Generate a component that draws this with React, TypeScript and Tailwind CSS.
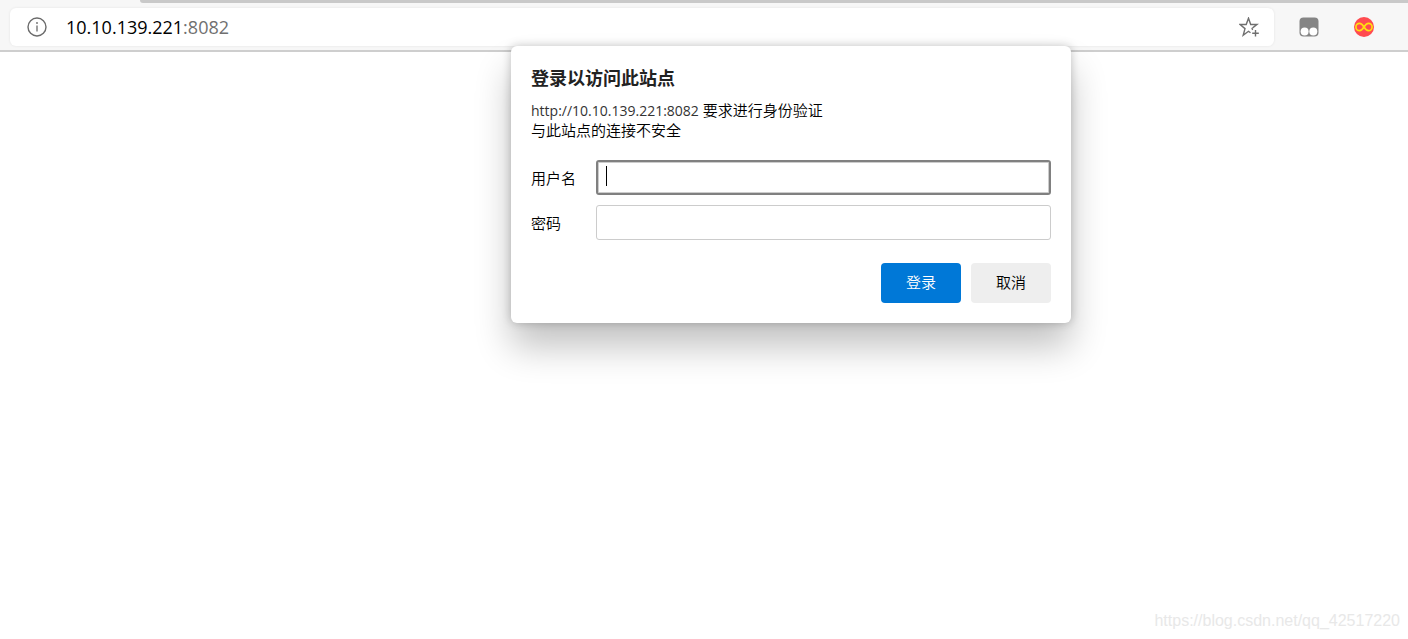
import React, { useState } from "react";

function InfoIcon() {
  return (
    <svg width="20" height="20" viewBox="0 0 20 20" fill="none" stroke="#6b6b6b" aria-hidden="true">
      <circle cx="10" cy="10" r="9" strokeWidth="1.4" />
      <path d="M10 8.5v6" strokeWidth="1.3" />
      <circle cx="10" cy="6" r="0.9" fill="#6b6b6b" stroke="none" />
    </svg>
  );
}

function FavoriteIcon() {
  return (
    <svg width="20" height="20" viewBox="0 0 20 20" fill="none" stroke="#6f6f6f" aria-hidden="true">
      <path
        d="M13.6 10.9 18 7.5h-6.3L9.5 1.2 7.2 7.5H1l5 4.1-1.8 6.6 5.3-3.9 2 1.4"
        strokeWidth="1.4"
      />
      <path d="M12.9 10.8 13.6 13" strokeWidth="1.3" />
      <path d="M16.5 13v6.5M13.2 16.3h6.6" strokeWidth="1.4" />
    </svg>
  );
}

function TampermonkeyIcon() {
  return (
    <svg width="20" height="20" viewBox="0 0 20 20" aria-hidden="true">
      <rect x="0.5" y="0.5" width="19" height="19" rx="4" fill="#858585" />
      <circle cx="5.6" cy="14.6" r="4" fill="#fff" />
      <circle cx="14.3" cy="14.6" r="4" fill="#fff" />
    </svg>
  );
}

function InfinityIcon() {
  return (
    <svg width="20" height="20" viewBox="0 0 20 20" fill="none" aria-hidden="true">
      <circle cx="10" cy="10" r="10" fill="#ff4b50" />
      <path
        d="M10 10C8.4 7.4 7.2 6.3 5.6 6.3a3.7 3.7 0 0 0 0 7.4C7.2 13.7 8.4 12.6 10 10s2.8-3.7 4.4-3.7a3.7 3.7 0 0 1 0 7.4C12.8 13.7 11.6 12.6 10 10Z"
        stroke="#ffe010"
        strokeWidth="1.7"
      />
    </svg>
  );
}

function Toolbar() {
  return (
    <header className="bg-[#f7f7f7] border-b-2 border-[#cecece]">
      {/* Tab strip edge */}
      <div className="ml-[140px] h-[3px] bg-[#c9c9c9] rounded-bl-full" />
      <div className="flex items-center h-[47px] pl-[10px] pr-[34px]">
        <div className="flex items-center flex-1 min-w-0 h-[38px] pl-[17px] pr-[15px] bg-white rounded-md shadow-[0_0_3px_rgba(0,0,0,0.08)]">
          <button aria-label="站点信息" className="flex-shrink-0">
            <InfoIcon />
          </button>
          <p className="flex-1 min-w-0 ml-[19px] text-[18px] leading-6 text-black">
            10.10.139.221<span className="text-[#707070]">:8082</span>
          </p>
          <button aria-label="收藏" className="flex-shrink-0">
            <FavoriteIcon />
          </button>
        </div>
        <div className="flex items-center gap-[35px] ml-[25px]">
          <button aria-label="Tampermonkey">
            <TampermonkeyIcon />
          </button>
          <button aria-label="Infinity">
            <InfinityIcon />
          </button>
        </div>
      </div>
    </header>
  );
}

function LoginDialog() {
  const [username, setUsername] = useState("");
  const [password, setPassword] = useState("");

  return (
    <form
      role="dialog"
      aria-labelledby="dialog-title"
      onSubmit={(e) => e.preventDefault()}
      className="absolute top-[46px] left-[511px] w-[560px] p-5 bg-white rounded-md text-[15px] leading-5 text-black font-[350] shadow-[0_24px_36px_rgba(0,0,0,0.24),0_0_10px_rgba(0,0,0,0.22)]"
    >
      <h1 id="dialog-title" className="text-[18px] leading-6 font-bold text-[#222222]">
        登录以访问此站点
      </h1>
      <p className="mt-[10px] h-5">
        <span className="text-[14px] font-normal text-[#333333]">http://10.10.139.221:8082</span> 要求进行身份验证
      </p>
      <p>与此站点的连接不安全</p>

      {/* Credentials */}
      <div className="grid grid-cols-[65px_1fr] items-center gap-y-[10px] mt-5">
        <label htmlFor="username">用户名</label>
        <div className="relative">
          <input
            id="username"
            type="text"
            value={username}
            onChange={(e) => setUsername(e.target.value)}
            className="block w-full h-[35px] px-[10px] bg-white border-2 border-[#808080] rounded-[3px] shadow-[inset_0_0_0_1px_#cccccc] outline-none"
          />
          {!username && (
            <span className="absolute left-[10px] top-[6px] w-px h-5 bg-black pointer-events-none" />
          )}
        </div>
        <label htmlFor="password">密码</label>
        <input
          id="password"
          type="password"
          value={password}
          onChange={(e) => setPassword(e.target.value)}
          className="block w-full h-[35px] px-[10px] bg-white border border-[#cccccc] rounded-[3px] outline-none"
        />
      </div>

      <div className="flex justify-end gap-[10px] mt-[23px]">
        <button type="submit" className="w-20 h-10 pb-0.5 rounded-sm bg-[#0078d7] text-white cursor-pointer">
          登录
        </button>
        <button type="button" className="w-20 h-10 pb-0.5 rounded-sm bg-[#eeeeee] text-black cursor-pointer">
          取消
        </button>
      </div>
    </form>
  );
}

export default function App() {
  return (
    <div className="relative flex flex-col min-h-screen bg-white font-['Open_Sans','Noto_Sans_CJK_SC',sans-serif]">
      <Toolbar />
      <main className="flex flex-col flex-1 justify-end items-end pr-[8px] pb-[6px]">
        <a
          href="https://blog.csdn.net/qq_42517220"
          className="text-[16px] leading-6 text-[#e8e8e8] font-['Liberation_Sans',sans-serif]"
        >
          https://blog.csdn.net/qq_42517220
        </a>
      </main>
      <LoginDialog />
    </div>
  );
}
